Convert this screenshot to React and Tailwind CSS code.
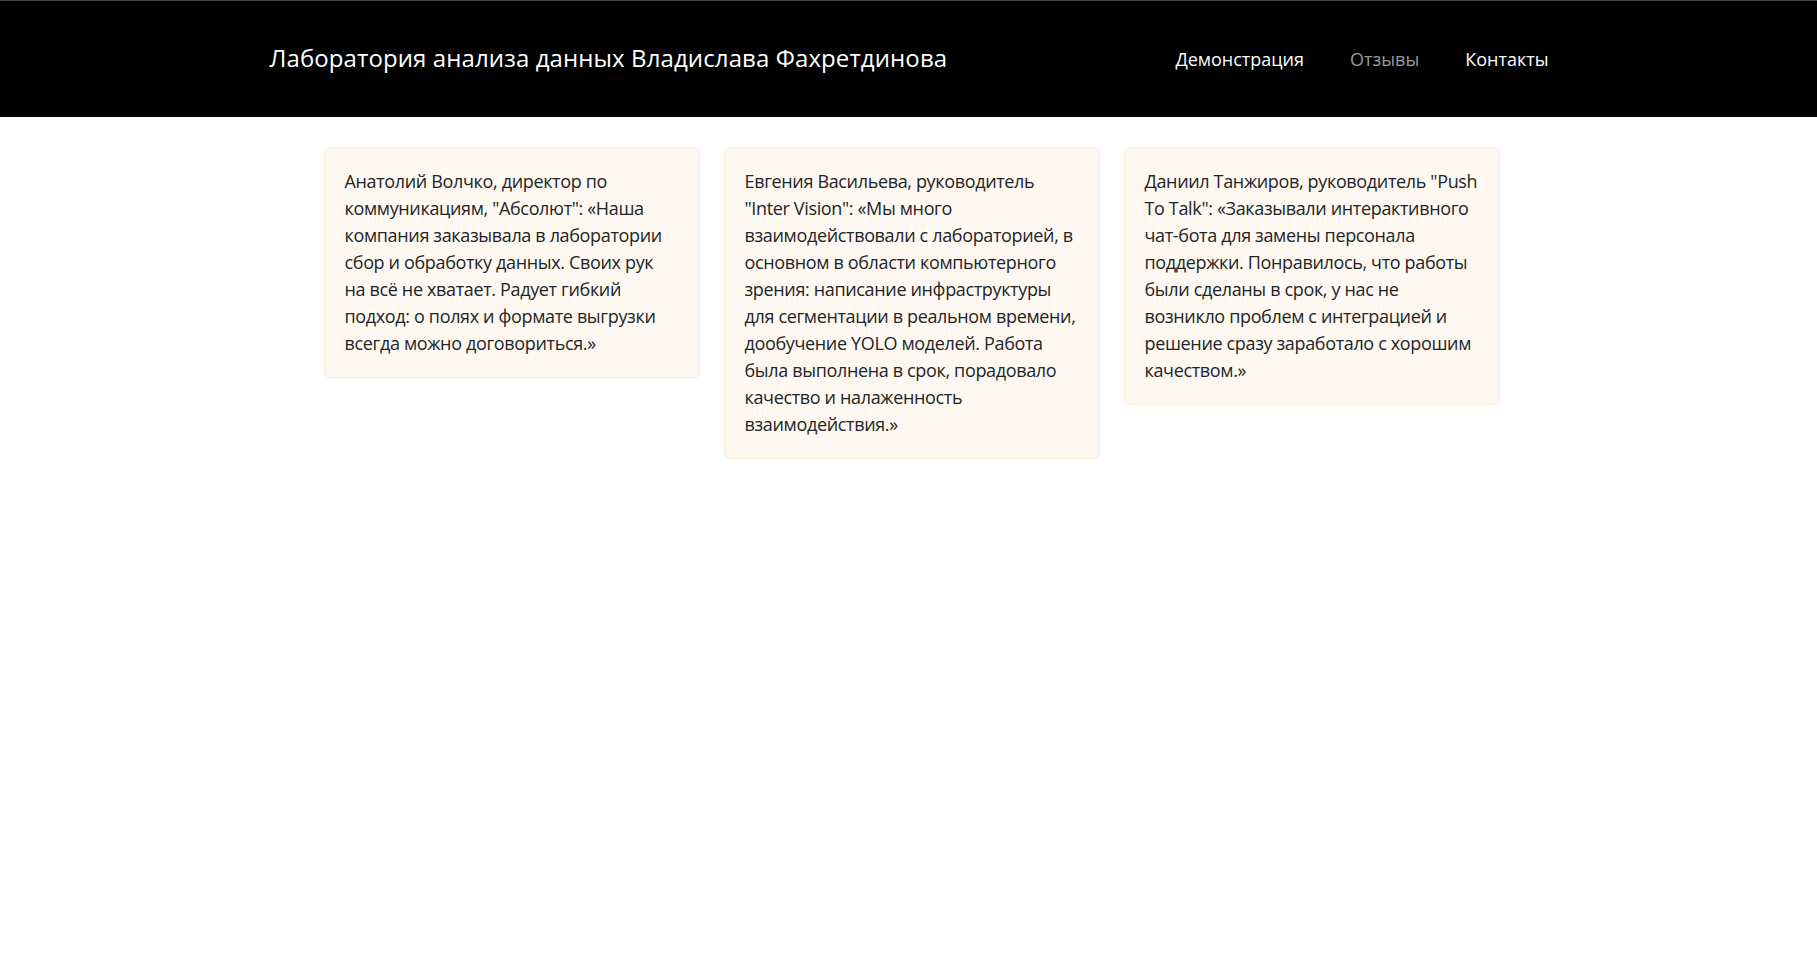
import React from 'react';

const reviews = [
  'Анатолий Волчко, директор по коммуникациям, "Абсолют": «Наша компания заказывала в лаборатории сбор и обработку данных. Своих рук на\u00a0всё не хватает. Радует гибкий подход: о полях и формате выгрузки всегда можно договориться.»',
  'Евгения Васильева, руководитель "Inter Vision": «Мы много взаимодействовали с лабораторией, в основном в области компьютерного зрения: написание инфраструктуры для сегментации в реальном времени, дообучение YOLO моделей. Работа была выполнена в срок, порадовало качество и налаженность взаимодействия.»',
  'Даниил Танжиров, руководитель "Push To Talk": «Заказывали интерактивного чат-бота для замены персонала поддержки. Понравилось, что работы были сделаны в срок, у нас не возникло проблем с интеграцией и решение сразу заработало с хорошим качеством.»',
];

const App = () => {
  return (
    <div className="min-h-screen bg-white text-[#212529] font-['Open_Sans',sans-serif]">
      {/* Navbar */}
      <header className="bg-black border-t border-[#444]">
        <div className="mx-auto w-[1320px] px-3 h-[116px] flex items-center justify-between">
          <span className="pl-[9px] text-[24px] tracking-[0.1px] text-white leading-8 -mt-[2px]">
            Лаборатория анализа данных Владислава Фахретдинова
          </span>
          <nav className="flex gap-[30px] text-[18px]">
            <a className="px-2 text-white">Демонстрация</a>
            <a className="px-2 text-white/60">Отзывы</a>
            <a className="px-2 text-white">Контакты</a>
          </nav>
        </div>
      </header>

      {/* Reviews */}
      <main className="mx-auto w-[1182px] pl-[6px] mt-[30px] grid grid-cols-3 gap-6 items-start">
        {reviews.map((text, i) => (
          <div key={i} className="bg-[#fff8f0] border border-[#fdebd3] rounded-md p-5 text-[18px] leading-[27px] tracking-[-0.35px]">
            {text}
          </div>
        ))}
      </main>
    </div>
  );
};

export default App;
